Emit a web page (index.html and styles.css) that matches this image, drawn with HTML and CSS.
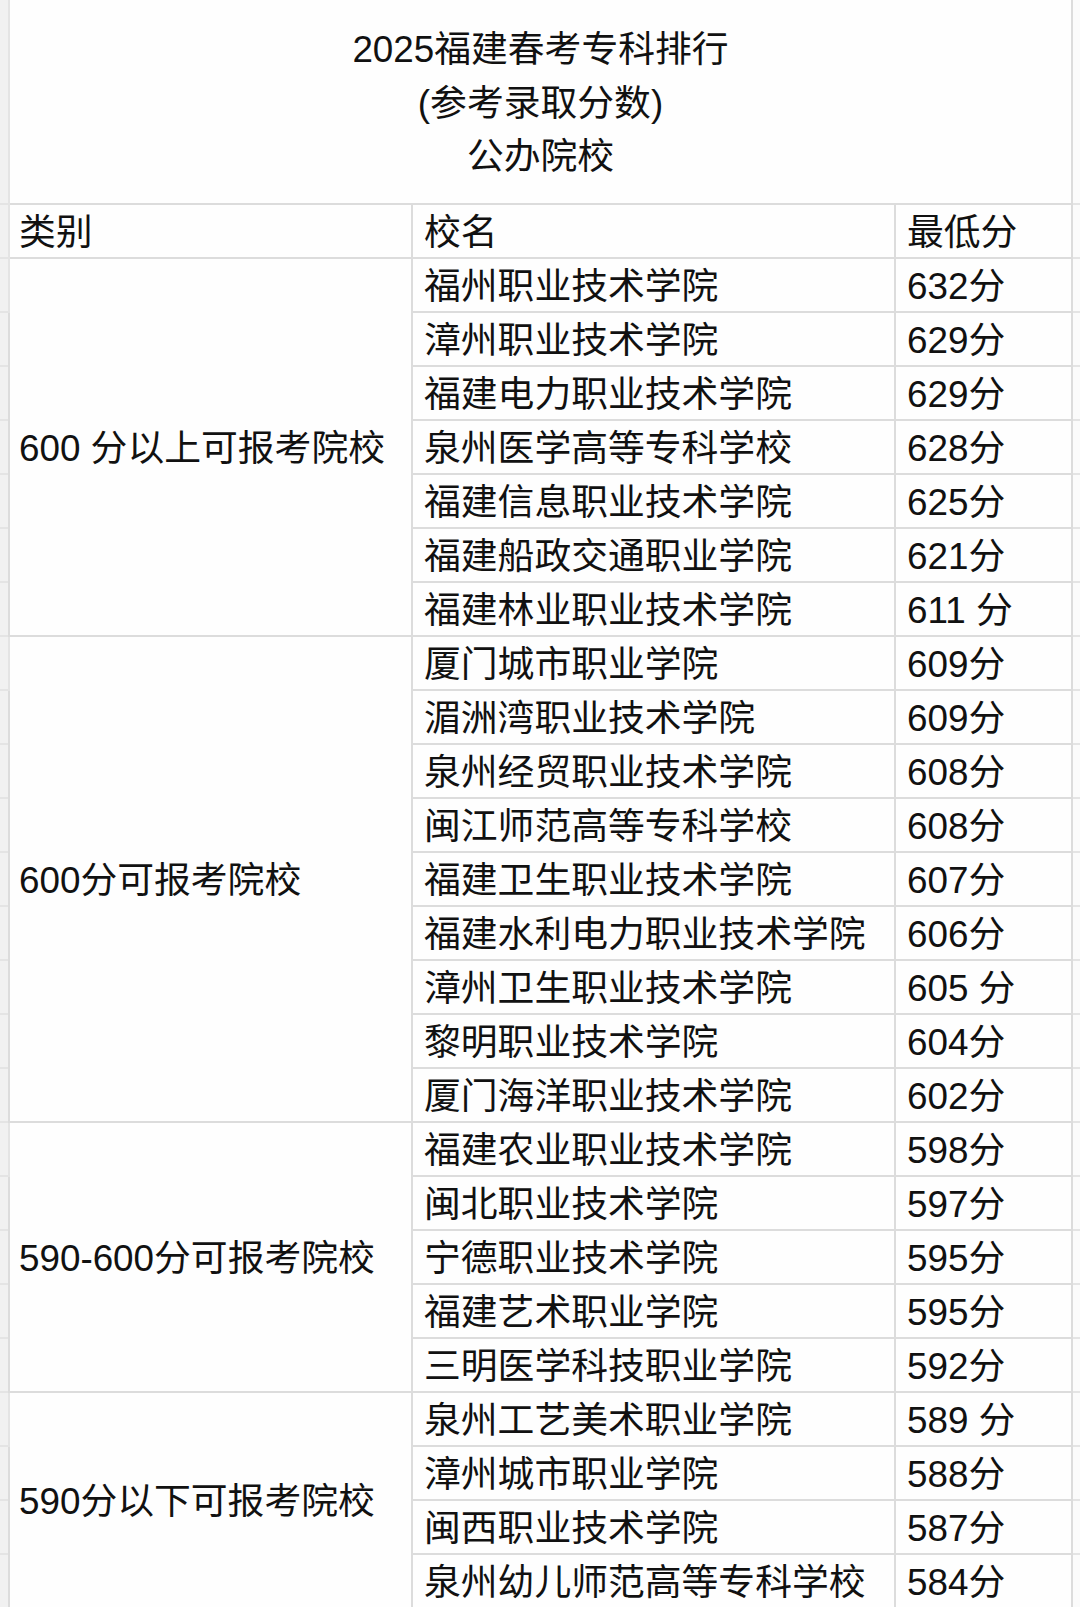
FILE: index.html
```html
<!DOCTYPE html>
<html lang="zh-CN">
<head>
<meta charset="utf-8">
<title>2025福建春考专科排行</title>
<link rel="stylesheet" href="styles.css">
</head>
<body>
<table class="sheet">
  <colgroup>
    <col class="c-gl"><col class="c-cat"><col class="c-name"><col class="c-score"><col class="c-gr">
  </colgroup>
  <tbody>
    <tr class="title-row">
      <td class="gl"></td>
      <td class="title" colspan="3">
        <div class="title-line">2025福建春考专科排行</div>
        <div class="title-line">(参考录取分数)</div>
        <div class="title-line">公办院校</div>
      </td>
      <td class="gr"></td>
    </tr>
    <tr class="head"><td class="gl"></td><td class="first">类别</td><td>校名</td><td>最低分</td><td class="gr"></td></tr>

    <tr><td class="gl"></td><td class="cat" rowspan="7">600 分以上可报考院校</td><td>福州职业技术学院</td><td>632分</td><td class="gr"></td></tr>
    <tr><td class="gl"></td><td>漳州职业技术学院</td><td>629分</td><td class="gr"></td></tr>
    <tr><td class="gl"></td><td>福建电力职业技术学院</td><td>629分</td><td class="gr"></td></tr>
    <tr><td class="gl"></td><td>泉州医学高等专科学校</td><td>628分</td><td class="gr"></td></tr>
    <tr><td class="gl"></td><td>福建信息职业技术学院</td><td>625分</td><td class="gr"></td></tr>
    <tr><td class="gl"></td><td>福建船政交通职业学院</td><td>621分</td><td class="gr"></td></tr>
    <tr><td class="gl"></td><td>福建林业职业技术学院</td><td>611 分</td><td class="gr"></td></tr>

    <tr><td class="gl"></td><td class="cat" rowspan="9">600分可报考院校</td><td>厦门城市职业学院</td><td>609分</td><td class="gr"></td></tr>
    <tr><td class="gl"></td><td>湄洲湾职业技术学院</td><td>609分</td><td class="gr"></td></tr>
    <tr><td class="gl"></td><td>泉州经贸职业技术学院</td><td>608分</td><td class="gr"></td></tr>
    <tr><td class="gl"></td><td>闽江师范高等专科学校</td><td>608分</td><td class="gr"></td></tr>
    <tr><td class="gl"></td><td>福建卫生职业技术学院</td><td>607分</td><td class="gr"></td></tr>
    <tr><td class="gl"></td><td>福建水利电力职业技术学院</td><td>606分</td><td class="gr"></td></tr>
    <tr><td class="gl"></td><td>漳州卫生职业技术学院</td><td>605 分</td><td class="gr"></td></tr>
    <tr><td class="gl"></td><td>黎明职业技术学院</td><td>604分</td><td class="gr"></td></tr>
    <tr><td class="gl"></td><td>厦门海洋职业技术学院</td><td>602分</td><td class="gr"></td></tr>

    <tr><td class="gl"></td><td class="cat" rowspan="5">590-600分可报考院校</td><td>福建农业职业技术学院</td><td>598分</td><td class="gr"></td></tr>
    <tr><td class="gl"></td><td>闽北职业技术学院</td><td>597分</td><td class="gr"></td></tr>
    <tr><td class="gl"></td><td>宁德职业技术学院</td><td>595分</td><td class="gr"></td></tr>
    <tr><td class="gl"></td><td>福建艺术职业学院</td><td>595分</td><td class="gr"></td></tr>
    <tr><td class="gl"></td><td>三明医学科技职业学院</td><td>592分</td><td class="gr"></td></tr>

    <tr><td class="gl"></td><td class="cat" rowspan="4">590分以下可报考院校</td><td>泉州工艺美术职业学院</td><td>589 分</td><td class="gr"></td></tr>
    <tr><td class="gl"></td><td>漳州城市职业学院</td><td>588分</td><td class="gr"></td></tr>
    <tr><td class="gl"></td><td>闽西职业技术学院</td><td>587分</td><td class="gr"></td></tr>
    <tr><td class="gl"></td><td>泉州幼儿师范高等专科学校</td><td>584分</td><td class="gr"></td></tr>
  </tbody>
</table>
</body>
</html>
```

FILE: styles.css
```css
html, body {
  margin: 0;
  padding: 0;
  background: #fdfdfc;
}

body {
  width: 1080px;
  height: 1607px;
  overflow: hidden;
}

.sheet {
  border-collapse: collapse;
  table-layout: fixed;
  width: 1080px;
  font-family: "Liberation Sans", "Noto Sans CJK SC", sans-serif;
  font-size: 36.8px;
  color: #111111;
}

.c-gl { width: 9px; }
.c-cat { width: 403px; }
.c-name { width: 483px; }
.c-score { width: 177px; }
.c-gr { width: 8px; }

.sheet td {
  border: 2px solid #dcdcdc;
  height: 48px;
  padding: 4px 0 0 11px;
  white-space: nowrap;
  overflow: hidden;
  vertical-align: middle;
  line-height: 40px;
  background: #fefefe;
}

.sheet td.gl {
  background: #f1f1f1;
  border-color: #e4e4e4;
  border-left: none;
  padding: 0;
  height: 52px;
}

.sheet td.gr {
  background: #fbfbfb;
  border-color: #e4e4e4;
  border-right: none;
  padding: 0;
  height: 52px;
}

.sheet td.first,
.sheet td.cat {
  padding-left: 9px;
}

.title-row td {
  border-top: none;
}

.sheet .title-row td.gl,
.sheet .title-row td.gr {
  height: 203px;
}

.sheet td.title {
  height: 199px;
  padding: 4px 0 0 0;
  text-align: center;
  vertical-align: middle;
}

.title-line {
  line-height: 53.5px;
}
```
